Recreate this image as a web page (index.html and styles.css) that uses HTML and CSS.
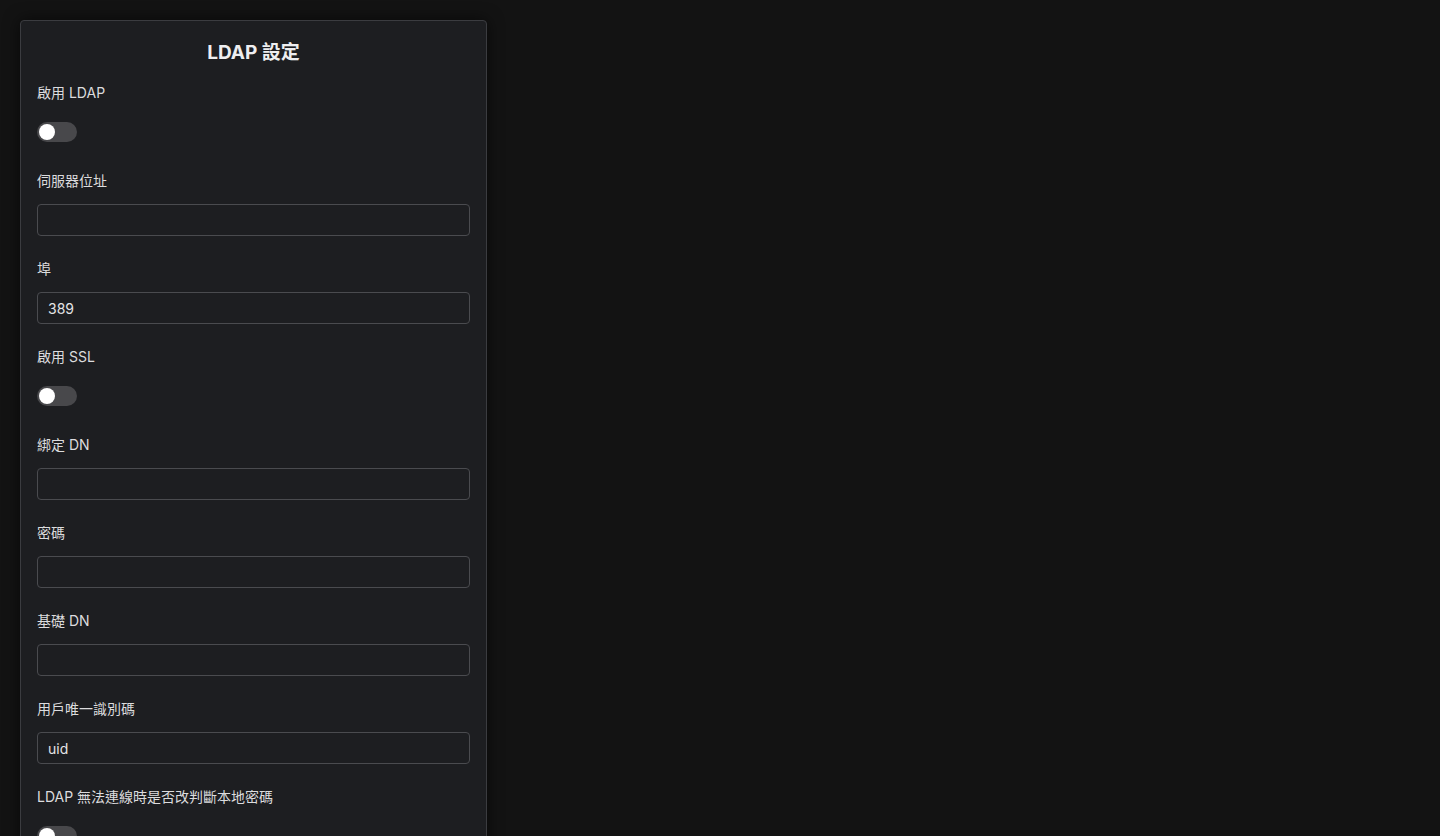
FILE: index.html
```html
<!DOCTYPE html>
<html lang="zh-Hant">
<head>
<meta charset="utf-8">
<title>LDAP 設定</title>
<link rel="stylesheet" href="styles.css">
</head>
<body>
<main class="page">
  <section class="card">
    <h1 class="title">LDAP 設定</h1>
    <div class="group">
      <label class="label">啟用 LDAP</label>
      <div class="control"><span class="switch"><span class="knob"></span></span></div>
    </div>
    <div class="group">
      <label class="label">伺服器位址</label>
      <div class="control"><input class="input" type="text" value=""></div>
    </div>
    <div class="group">
      <label class="label">埠</label>
      <div class="control"><input class="input" type="text" value="389"></div>
    </div>
    <div class="group">
      <label class="label">啟用 SSL</label>
      <div class="control"><span class="switch"><span class="knob"></span></span></div>
    </div>
    <div class="group">
      <label class="label">綁定 DN</label>
      <div class="control"><input class="input" type="text" value=""></div>
    </div>
    <div class="group">
      <label class="label">密碼</label>
      <div class="control"><input class="input" type="password" value=""></div>
    </div>
    <div class="group">
      <label class="label">基礎 DN</label>
      <div class="control"><input class="input" type="text" value=""></div>
    </div>
    <div class="group">
      <label class="label">用戶唯一識別碼</label>
      <div class="control"><input class="input" type="text" value="uid"></div>
    </div>
    <div class="group">
      <label class="label">LDAP 無法連線時是否改判斷本地密碼</label>
      <div class="control"><span class="switch"><span class="knob"></span></span></div>
    </div>
  </section>
</main>
</body>
</html>
```
FILE: styles.css
```css
html, body {
  margin: 0;
  padding: 0;
  background: #131313;
}
body {
  font-family: Inter, "Noto Sans CJK TC", "Noto Sans", sans-serif;
  color: #e4e4e6;
}
.page {
  padding: 20px;
}
.card {
  width: 433px;
  background: #1d1e21;
  border: 1px solid #3b3c40;
  border-radius: 4px;
  padding: 17px 16px 24px;
  box-shadow: 0 0 16px rgba(0, 0, 0, 0.6);
}
.title {
  margin: 0 0 15px;
  font-size: 19px;
  line-height: 30px;
  font-weight: 700;
  text-align: center;
  color: #eeeef0;
}
.group {
  display: flex;
  flex-direction: column;
  gap: 13px;
  margin-bottom: 23px;
}
.label {
  font-size: 14px;
  line-height: 20px;
  color: #dcdcde;
}
.control {
  height: 32px;
  display: flex;
  align-items: center;
}
.input {
  box-sizing: border-box;
  width: 100%;
  height: 32px;
  margin: 0;
  padding: 0 10px;
  background: #1d1e21;
  border: 1px solid #4a4b4f;
  border-radius: 4px;
  font-family: Inter, "Noto Sans CJK TC", sans-serif;
  font-size: 14px;
  color: #e4e4e6;
  outline: none;
}
.switch {
  width: 40px;
  height: 20px;
  border-radius: 10px;
  background: #48484b;
  display: flex;
  align-items: center;
  padding: 0 2px;
  box-sizing: border-box;
}
.knob {
  width: 16px;
  height: 16px;
  border-radius: 50%;
  background: #ffffff;
}
```
